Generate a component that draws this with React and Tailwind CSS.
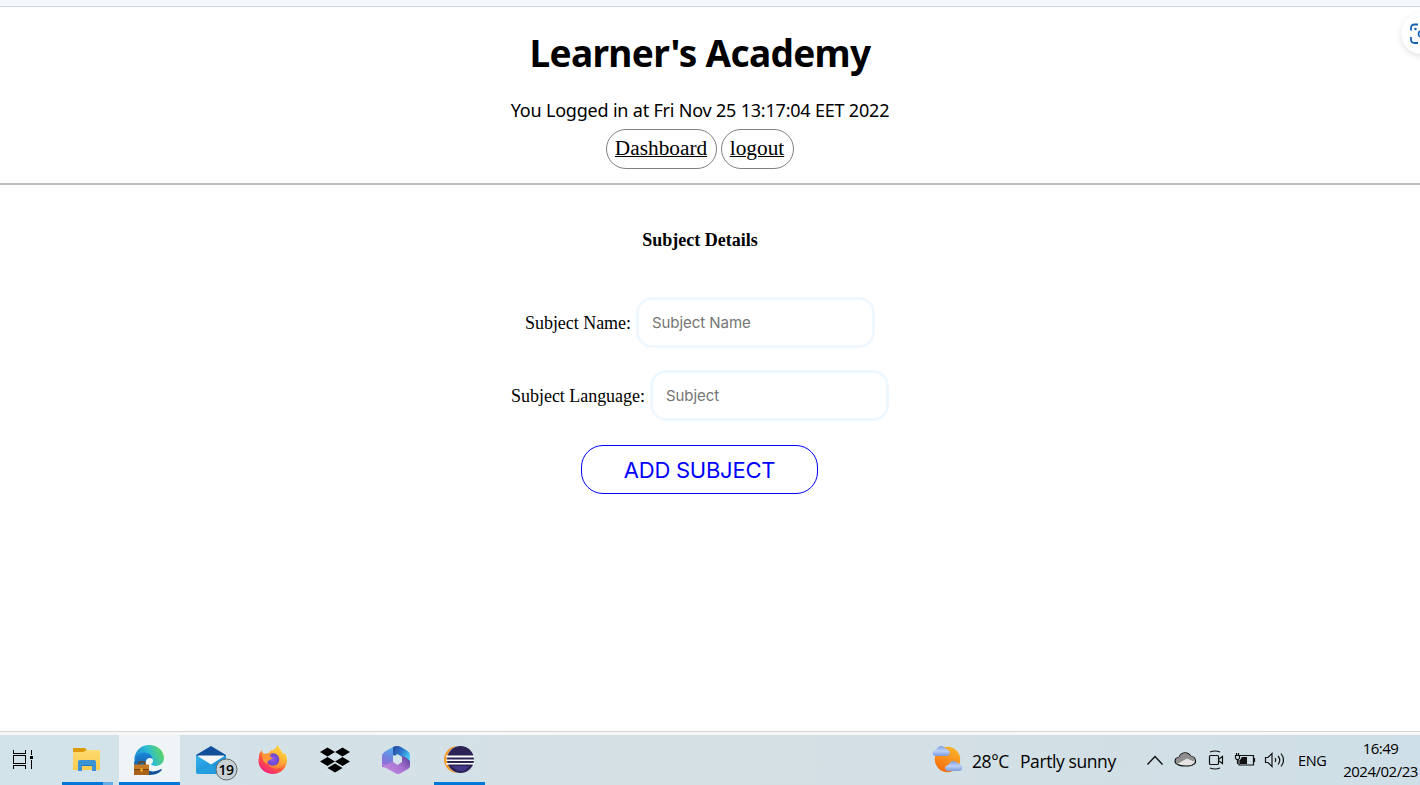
import React from "react";

function TaskViewIcon() {
  return (
    <svg width="62" height="50" viewBox="0 0 62 50" fill="none" stroke="#000" strokeWidth="1" shapeRendering="crispEdges">
      <path d="M13.500 15v3.500h12V15M13.500 34v-3.500h12V34" />
      <path d="M13.500 20.500h12v8h-12zM31.500 15v5M31.500 25v9" />
      <path d="M30 21h3v3h-3z" fill="#000" stroke="none" />
    </svg>
  );
}

function ExplorerIcon() {
  return (
    <svg width="57" height="50" viewBox="0 0 57 50">
      <defs>
        <linearGradient id="folder" x1="0" y1="0" x2="0" y2="1">
          <stop offset="0" stopColor="#ffda70" />
          <stop offset="1" stopColor="#f9cc4e" />
        </linearGradient>
      </defs>
      <path d="M11 14q0-1 1-1h11l2 2-2 3H11z" fill="#dd9b0b" />
      <path d="M11 17h10.500l3-2H37q1 0 1 1v18q0 1-1 1H11z" fill="url(#folder)" />
      <path d="M16 36V27q0-2 2-2h14q2 0 2 2v9h-4v-6H20v6z" fill="#3d92d5" />
      <path d="M19.500 30h11v1h-11z" fill="#227bc0" />
      <path d="M0 47h41v3H0z" fill="#0078d7" />
      <path d="M41 47h10v3H41z" fill="#65ade5" />
    </svg>
  );
}

function EdgeIcon() {
  return (
    <svg width="61" height="50" viewBox="0 0 61 50">
      <defs>
        <linearGradient id="edgeTop" x1="0" y1=".6" x2="1" y2=".3">
          <stop offset="0" stopColor="#1685d3" />
          <stop offset=".5" stopColor="#2cbbd3" />
          <stop offset="1" stopColor="#62d85a" />
        </linearGradient>
        <linearGradient id="edgeLow" x1="0" y1="0" x2="0" y2="1">
          <stop offset="0" stopColor="#1b86d8" />
          <stop offset="1" stopColor="#114b91" />
        </linearGradient>
      </defs>
      <path d="M15 26C16 15 22 10 30 10c9 0 15 6 15 13 0 5-4 8-9 8-3 0-5-1-5-2 1-1 3-2 2-5-2-7-14-7-18 2z" fill="url(#edgeTop)" />
      <path d="M15 30c0-9 7-14 13-12 4 1 6 4 5 7-3-2-7 0-7 5 0 6 8 8 14 5l2-1c1 0 1 1 0 2-3 3-8 4-12 4-9 0-15-4-15-10z" fill="url(#edgeLow)" />
      <path d="M27 27q0-4 4-4 3 0 3 3 0 2-2 3 1 2 5 2-3 3-7 2-3-2-3-6z" fill="#eff4f7" />
      <path d="M20 30v-2q0-1 1-1h4q1 0 1 1v2" fill="none" stroke="#70410e" strokeWidth="1.500" />
      <path d="M15 29.500h15V40H15z" fill="#c67c25" />
      <path d="M15 34.500h15V40H15z" fill="#a86116" />
      <path d="M15 34.500h15" stroke="#7a430d" />
      <path d="M21.500 33.500h2v3h-2z" fill="#ffc32f" />
      <path d="M0 47h61v3H0z" fill="#0078d7" />
    </svg>
  );
}

function MailIcon() {
  return (
    <svg width="62" height="50" viewBox="0 0 62 50">
      <defs>
        <linearGradient id="mail" x1="0" y1="0" x2="1" y2="1">
          <stop offset="0" stopColor="#35b4ed" />
          <stop offset="1" stopColor="#117dcc" />
        </linearGradient>
      </defs>
      <path d="M16 20 31 11l15 9v3H16z" fill="#124f9a" />
      <path d="M18 20.500h26v8l-13 5-13-7z" fill="#f4f5f7" />
      <path d="M16 20l15 9.500L46 20v17q0 2-2 2H18q-2 0-2-2z" fill="url(#mail)" />
      <path d="M16.500 38.500 31 29.500l14 9.500H18z" fill="#28a9e8" opacity=".55" />
      <circle cx="46.500" cy="34.500" r="10.500" fill="#c9d1d5" stroke="#61676a" />
      <text x="46" y="39.500" textAnchor="middle" fontFamily="'Open Sans', sans-serif" fontSize="14" fontWeight="600" letterSpacing="-0.5" fill="#000">19</text>
    </svg>
  );
}

function FirefoxIcon() {
  return (
    <svg width="62" height="50" viewBox="0 0 62 50">
      <defs>
        <linearGradient id="fox" x1=".85" y1="0" x2=".2" y2="1">
          <stop offset="0" stopColor="#fff04b" />
          <stop offset=".35" stopColor="#ffb332" />
          <stop offset=".65" stopColor="#ff563f" />
          <stop offset="1" stopColor="#ef168b" />
        </linearGradient>
        <radialGradient id="foxGlobe">
          <stop offset="0" stopColor="#9459eb" />
          <stop offset="1" stopColor="#6547cb" />
        </radialGradient>
      </defs>
      <path d="M17 21c0-2 1-4 3-6v3l3 1 4-1c1-2 2-3 4-3 2-1 4-3 5-5 1 4 4 5 5 9l2-1c1 2 2 4 2 7 0 8-6 14-14 14S16.500 33 16.500 26z" fill="url(#fox)" />
      <circle cx="31" cy="24.500" r="6.200" fill="url(#foxGlobe)" />
      <path d="M20 17l4 3 5-1-1 3 3 1-5 3-1 3c-4-2-5-6-5-12z" fill="#ff9938" />
      <path d="M29 18c4-2 8 0 9 4 1 7-6 11-12 7 4 8 16 5 17-4 0-6-5-6-7-15-3 3-2 5-7 8z" fill="#ffbd35" opacity=".45" />
    </svg>
  );
}

function DropboxIcon() {
  return (
    <svg width="62" height="50" viewBox="0 0 62 50">
      <path d="m23.500 12.500 7.500 4.500-7.500 4.500L16 17zm15 0L46 17l-7.500 4.500L31 17zM23.500 22l7.500 4.500-7.500 4.500-7.500-4.500zm15 0 7.500 4.500-7.500 4.500-7.500-4.500zM31 28.500l7.500 4.500-7.500 4.500-7.500-4.500z" fill="#000" />
    </svg>
  );
}

function OfficeIcon() {
  return (
    <svg width="62" height="50" viewBox="0 0 62 50">
      <defs>
        <linearGradient id="officeA" x1=".6" y1="0" x2=".2" y2="1">
          <stop offset="0" stopColor="#4ab2ee" />
          <stop offset=".5" stopColor="#6b86df" />
          <stop offset="1" stopColor="#a163d8" />
        </linearGradient>
        <linearGradient id="officeB" x1="0" y1="0" x2="1" y2=".7">
          <stop offset="0" stopColor="#2c4399" />
          <stop offset=".5" stopColor="#2c79d0" />
          <stop offset="1" stopColor="#4bd5fa" />
        </linearGradient>
        <linearGradient id="officeC" x1="0" y1=".7" x2="1" y2="0">
          <stop offset="0" stopColor="#c58be2" />
          <stop offset=".5" stopColor="#a673cf" />
          <stop offset="1" stopColor="#553b98" />
        </linearGradient>
      </defs>
      <path d="M33 11q-3-.500-6 1l-8 4.500q-3 2-3 5V32l8 1q3-1 3-4V20z" fill="url(#officeA)" />
      <path d="M27 12q5-2 8 0l6.500 4q2.500 1.500 2.500 4.500V28L27 20z" fill="url(#officeB)" />
      <path d="M44 26v5q0 2-2 3l-7 4q-3 2-6 0l-9-5q-4-2-4-5 2 3 6 1l13-8q4 0 9 5z" fill="url(#officeC)" />
      <path d="m31.500 19 4.500 3v5l-4.500 3-4.500-3v-5z" fill="#d5e4ea" />
    </svg>
  );
}

function EclipseIcon() {
  return (
    <svg width="62" height="50" viewBox="0 0 62 50">
      <circle cx="29.500" cy="24.500" r="13.500" fill="#f69a2c" />
      <circle cx="33" cy="24.500" r="14" fill="#d3e2e8" />
      <circle cx="32.500" cy="24.500" r="13.500" fill="#2c2255" />
      <path d="M24 31h17q-3 5-8 5t-9-5z" fill="#42388a" />
      <path d="M18 20.500h28v2H18zm0 4h28v1.500H18zm0 3.500h28v1.500H18z" fill="#fff" />
      <path d="M6 47h51v3H6z" fill="#0078d7" />
    </svg>
  );
}

function WeatherIcon() {
  return (
    <svg width="32" height="50" viewBox="0 0 32 50">
      <defs>
        <linearGradient id="sun" x1=".8" y1="0" x2=".3" y2="1">
          <stop offset="0" stopColor="#fbb62c" />
          <stop offset="1" stopColor="#f66c0e" />
        </linearGradient>
        <linearGradient id="cloud" x1="0" y1="0" x2="0" y2="1">
          <stop offset="0" stopColor="#7f9fe0" />
          <stop offset=".5" stopColor="#bdd0f6" />
          <stop offset="1" stopColor="#7b9bdc" />
        </linearGradient>
      </defs>
      <circle cx="15.500" cy="24.500" r="12.700" fill="url(#sun)" />
      <path d="M3 21a3 3 0 0 1-.500-5.800q1 0 2-1a5 5 0 0 1 9-.700q2 0 3 2 2 1 1 3.500-.500 2-3 2z" fill="url(#cloud)" />
      <path d="M15.500 36a3 3 0 0 1-.500-5.800q1 0 2-1a5 5 0 0 1 9-.700q2 0 3 2 2 1 1 3.500-.500 2-3 2z" fill="url(#cloud)" />
    </svg>
  );
}

function TrayIcons() {
  return (
    <svg width="160" height="50" viewBox="0 0 160 50" fill="none" stroke="#111" strokeWidth="1.200">
      <path d="m12.500 29.500 7.500-8 7.500 8" strokeWidth="1.400" />
      <path d="M43 29.500c-4-1-4-7 1-7 2-6 9-6 12-1 5 0 6 7 2 8-1 2-13 2-15 0z" fill="#e4e4e4" />
      <path d="M44 22.500c3-6 9-5 12-1 3 0 4 3 3 5l-7-3-9 5c-3-1-3-6 1-6z" fill="#8f8f8f" stroke="none" />
      <path d="M75.500 20.500h7q1 0 1 1v7q0 1-1 1h-7q-1 0-1-1v-7q0-1 1-1zM84 24l3.500-2.500v7L84 26M75 17q5-2 10 0M75 33q5 2 10 0" />
      <path d="M105 20.500h13.500v9.500h-14.500v-5M119.500 23v4" />
      <path d="M107 22h5v7h-7v-4z" fill="#111" stroke="none" />
      <path d="M100.500 20.500h4v2.500l-1 1.500h-2l-1-1.500zM101.500 18v2.500M103.500 18v2.500M102.500 24.500V29" />
      <path d="M130.500 22.500h2.500l4-4v13l-4-4h-2.500zM140 23q1.500 2 0 4M143 21q3.500 4 0 8.500M146 18.500q5 6.500 0 13" />
    </svg>
  );
}

function Field({ label, placeholder }) {
  return (
    <div className="flex items-center justify-center">
      <label className="mr-[5px] text-[18px] leading-[20px] tracking-[-0.04px]">{label}</label>
      <input
        placeholder={placeholder}
        className="h-[51px] w-[239px] rounded-[16px] border-[3px] border-[#f0f8ff] bg-white px-[13px] font-['Inter',sans-serif] text-[15px] tracking-[-0.05px] outline-none placeholder:text-[#757575]"
      />
    </div>
  );
}

function Header() {
  return (
    <header className="flex h-[178px] flex-col items-center border-b-2 border-[#bebebe] pr-5">
      <h1 className="mt-[23px] h-[46px] whitespace-nowrap font-['Noto_Sans',sans-serif] text-[37px] font-bold leading-[46px] tracking-[-0.65px]">
        Learner's Academy
      </h1>
      <p className="mt-[23px] h-[22px] whitespace-nowrap font-['Noto_Sans',sans-serif] text-[18px] leading-[22px] tracking-[-0.2px]">
        You Logged in at Fri Nov 25 13:17:04 EET 2022
      </p>
      <nav className="mt-[8px] flex gap-[4px] pr-px text-[21.300px]">
        <a href="#dashboard" className="flex h-[40px] w-[111px] justify-center rounded-full border border-[#808080] leading-[36px] underline decoration-1">
          Dashboard
        </a>
        <a href="#logout" className="flex h-[40px] w-[73px] justify-center rounded-full border border-[#808080] leading-[36px] underline decoration-1">
          logout
        </a>
      </nav>
    </header>
  );
}

function Taskbar() {
  return (
    <footer className="flex h-[50px] shrink-0 items-center bg-linear-to-r from-[#d2e3ea] via-[#d5e0e4] to-[#cfdfe7] font-['Open_Sans',sans-serif] text-black">
      <TaskViewIcon />
      <ExplorerIcon />
      <div className="h-[50px] w-[61px] bg-[#eff4f7]">
        <EdgeIcon />
      </div>
      <MailIcon />
      <FirefoxIcon />
      <DropboxIcon />
      <OfficeIcon />
      <EclipseIcon />
      <div className="ml-auto flex w-[488px] shrink-0 items-center">
        <WeatherIcon />
        <div className="ml-[8px] flex w-[163px] gap-[11px] whitespace-nowrap pt-px text-[17.500px] leading-[24px] tracking-[-0.4px]">
          <span>28°C</span>
          <span>Partly sunny</span>
        </div>
        <TrayIcons />
        <span className="ml-[3px] w-[41px] pt-px text-[14.500px] tracking-[-0.4px]">ENG</span>
        <div className="w-[81px] shrink-0 whitespace-nowrap pl-[2px] text-center text-[15px] leading-[23px] tracking-[-0.5px]">
          <div>16:49</div>
          <div>2024/02/23</div>
        </div>
      </div>
    </footer>
  );
}

export default function App() {
  return (
    <div className="flex h-screen flex-col overflow-hidden bg-white font-['Liberation_Serif',serif] text-black">
      <div className="h-[7px] shrink-0 border-b border-[#cbd5dd] bg-[#f5f8fb]" />
      <div className="relative flex-1">
        <Header />
        <button aria-label="Visual search" className="absolute right-[-22px] top-[6px] flex h-[41px] w-[41px] items-center justify-center rounded-full bg-white pr-[2px] shadow-[0_2px_6px_rgba(0,0,0,0.12)]">
          <svg width="22" height="22" viewBox="0 0 22 22" fill="none" stroke="#1460b5" strokeWidth="1.800">
            <path d="M1 7.500V5q0-3.500 3.500-3.500H8M1 14v2.500Q1 20 4.500 20H8M14 1.500h3.500Q21 1.500 21 5v2.500" />
            <circle cx="11.500" cy="11" r="3" />
            <circle cx="5.500" cy="6" r="1.200" fill="#1460b5" stroke="none" />
          </svg>
        </button>
        <main className="flex flex-col items-center pr-5">
          <h2 className="mt-[45px] text-[18px] font-bold leading-[20px]">Subject Details</h2>
          <form className="mt-[47px] flex flex-col items-center gap-[22px]" onSubmit={(event) => event.preventDefault()}>
            <Field label="Subject Name:" placeholder="Subject Name" />
            <Field label="Subject Language:" placeholder="Subject" />
            <button className="mt-[2px] mr-px h-[49px] w-[237px] rounded-[22px] border border-[#0000ff] pt-[2px] font-['Inter',sans-serif] text-[22px] tracking-[-0.25px] text-[#0000ff]">
              ADD SUBJECT
            </button>
          </form>
        </main>
      </div>
      <div className="h-[4px] shrink-0 border-t border-[#d5d5d5] bg-[#f7f7f7]" />
      <Taskbar />
    </div>
  );
}
